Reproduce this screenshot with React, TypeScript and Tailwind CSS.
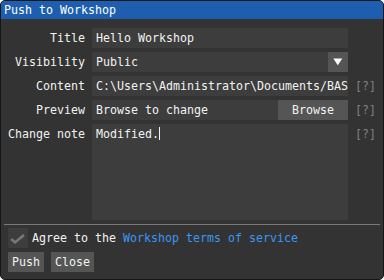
const mono = "font-['DejaVu_Sans_Mono','Liberation_Mono',monospace] text-[11.63px]";

function Label({ children }: { children: string }) {
  return <div className="w-[77px] shrink-0 text-right leading-[20px] whitespace-pre">{children}</div>;
}

function Help() {
  return <div className="ml-[7px] leading-[20px] text-[#808080] whitespace-pre">[?]</div>;
}

function Frame({ children, className = "w-[256px]" }: { children?: React.ReactNode; className?: string }) {
  return (
    <div className={`ml-[7px] h-[20px] bg-[#3d3d3d] px-[4px] leading-[20px] whitespace-pre overflow-hidden ${className}`}>
      {children}
    </div>
  );
}

export default function App() {
  return (
    <div
      className={`w-[384px] h-[280px] rounded-[5px] border border-[#161616] bg-[#333333] overflow-hidden flex flex-col text-[#f2f2f2] ${mono}`}
    >
      <div className="h-[18px] shrink-0 bg-[#1d5fae] pl-[3px] leading-[18px] whitespace-pre text-white">Push to Workshop</div>

      <div className="flex flex-col pl-[7px] pt-[9px]">
        <div className="flex flex-col gap-[4px]">
          <div className="flex">
            <Label>Title</Label>
            <Frame>Hello Workshop</Frame>
          </div>

          <div className="flex">
            <Label>Visibility</Label>
            <div className="ml-[7px] flex h-[20px] w-[256px] bg-[#3d3d3d]">
              <div className="flex-1 px-[4px] leading-[20px]">Public</div>
              <div className="flex h-[20px] w-[20px] items-center justify-center bg-[#555555]">
                <svg width="10" height="8" viewBox="0 0 10 8">
                  <path d="M0.3 0.5 L9.3 0.5 L4.8 7.2 Z" fill="#ffffff" />
                </svg>
              </div>
            </div>
          </div>

          <div className="flex">
            <Label>Content</Label>
            <Frame>C:\Users\Administrator\Documents/BAS</Frame>
            <Help />
          </div>

          <div className="flex">
            <Label>Preview</Label>
            <div className="ml-[7px] flex h-[20px] w-[256px] bg-[#3d3d3d]">
              <div className="flex-1 px-[4px] leading-[20px] whitespace-pre">Browse to change</div>
              <div className="h-[20px] w-[70px] bg-[#555555] text-center leading-[20px]">Browse</div>
            </div>
            <Help />
          </div>

          <div className="flex items-start">
            <Label>Change note</Label>
            <div className="ml-[7px] h-[96px] w-[256px] bg-[#3d3d3d] px-[4px] leading-[20px] whitespace-pre">
              Modified.<span className="inline-block h-[13px] w-px bg-[#f2f2f2] align-[-2px]" />
            </div>
            <Help />
          </div>
        </div>

        <div className="ml-[-4px] mt-[4px] h-px w-[376px] bg-[#7a7a7a]" />

        <div className="mt-[3px] flex items-center">
          <div className="h-[20px] w-[20px] bg-[#3d3d3d]">
            <svg width="20" height="20" viewBox="0 0 20 20">
              <path d="M3.2 11 L7 14.4 L16 7" fill="none" stroke="#787878" strokeWidth="2.6" strokeLinejoin="miter" />
            </svg>
          </div>
          <div className="ml-[4px] leading-[20px] whitespace-pre">
            Agree to the <span className="text-[#3a97f5]">Workshop terms of service</span>
          </div>
        </div>

        <div className="mt-[4px] flex gap-[7px]">
          <div className="h-[20px] bg-[#555555] px-[4px] leading-[20px]">Push</div>
          <div className="h-[20px] bg-[#555555] px-[4px] leading-[20px]">Close</div>
        </div>
      </div>
    </div>
  );
}
